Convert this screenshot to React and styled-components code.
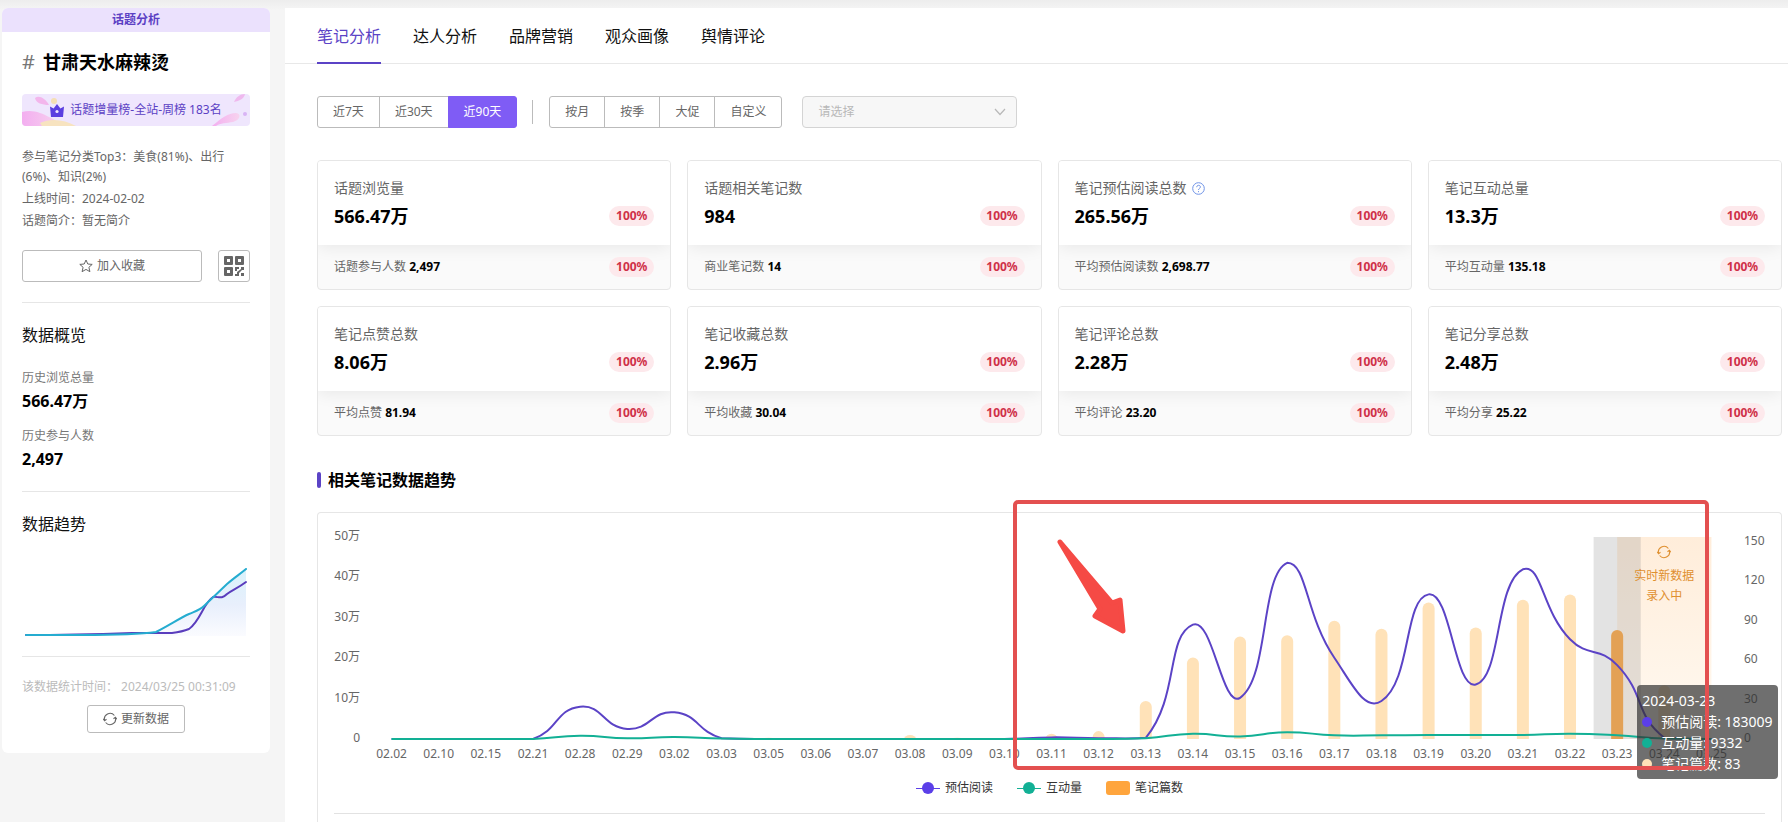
import { useLayoutEffect, useRef, useState } from 'react';
import styled, { createGlobalStyle } from 'styled-components';

const tabs = ['笔记分析', '达人分析', '品牌营销', '观众画像', '舆情评论'];
const quickRanges = ['近7天', '近30天', '近90天'];
const periods = ['按月', '按季', '大促', '自定义'];

const metrics = [
    { title: '话题浏览量', value: '566.47万', subLabel: '话题参与人数', subValue: '2,497' },
    { title: '话题相关笔记数', value: '984', subLabel: '商业笔记数', subValue: '14' },
    { title: '笔记预估阅读总数', value: '265.56万', subLabel: '平均预估阅读数', subValue: '2,698.77', help: true },
    { title: '笔记互动总量', value: '13.3万', subLabel: '平均互动量', subValue: '135.18' },
    { title: '笔记点赞总数', value: '8.06万', subLabel: '平均点赞', subValue: '81.94' },
    { title: '笔记收藏总数', value: '2.96万', subLabel: '平均收藏', subValue: '30.04' },
    { title: '笔记评论总数', value: '2.28万', subLabel: '平均评论', subValue: '23.20' },
    { title: '笔记分享总数', value: '2.48万', subLabel: '平均分享', subValue: '25.22' },
];

const days = [
    '02.02', '02.10', '02.15', '02.21', '02.28', '02.29', '03.02', '03.03', '03.05', '03.06',
    '03.07', '03.08', '03.09', '03.10', '03.11', '03.12', '03.13', '03.14', '03.15', '03.16',
    '03.17', '03.18', '03.19', '03.20', '03.21', '03.22', '03.23', '03.24', '03.25',
];

// reads and interactions are in units of 万
const reads = [
    0, 0, 0, 0, 8, 2.5, 6.6, 0.2, 0, 0, 0, 0, 0, 0, 0.4, 0.2, 0.3, 28.3, 10.2, 43.6,
    20.1, 9.4, 35.8, 13.5, 42, 24.7, 18.3, 0.3, 0,
];
const interactions = [
    0, 0, 0, 0, 0.8, 0.2, 0.5, 0.1, 0, 0, 0, 0, 0, 0, 0, 0, 0.2, 1.3, 0.6, 1.7,
    0.9, 0.9, 1, 1, 1, 1.3, 0.93, 0.1, 0,
];
const notes = [
    0, 0, 0, 0, 0, 0, 0, 0, 1, 0, 0, 3, 1, 0, 4, 6, 29, 62, 78, 79,
    90, 84, 104, 85, 106, 110, 83, 41, 0,
];

const PLOT = { left: 34, right: 30, top: 24, bottom: 226 };
const ACTIVE_DAY = 26;

function smoothPath(points) {
    const ys = points.map(p => p[1]);
    const minY = Math.min(...ys);
    const maxY = Math.max(...ys);
    const clamp = y => Math.max(minY, Math.min(maxY, y));

    let d = `M${points[0][0]} ${points[0][1]}`;
    let cp0 = points[0];
    for (let i = 1; i < points.length; i++) {
        const [px, py] = points[i - 1];
        const [x, y] = points[i];
        const next = points[i + 1];
        let cp1 = [x, y];
        let nextCp = [x, y];
        if (next) {
            const vx = next[0] - px;
            const vy = next[1] - py;
            const before = Math.hypot(x - px, y - py);
            const after = Math.hypot(next[0] - x, next[1] - y);
            const ratio = after / (before + after);
            cp1 = [x - vx * 0.5 * (1 - ratio), clamp(y - vy * 0.5 * (1 - ratio))];
            nextCp = [x + vx * 0.5 * ratio, clamp(y + vy * 0.5 * ratio)];
        }
        d += `C${cp0[0]} ${cp0[1]} ${cp1[0]} ${cp1[1]} ${x} ${y}`;
        cp0 = nextCp;
    }
    return d;
}

// a bar 12 wide with a round top
function barPath(x, top) {
    const r = Math.min(6, PLOT.bottom - top);
    return `M${x - 6} ${PLOT.bottom}V${top + r}A6 ${r} 0 0 1 ${x + 6} ${top + r}V${PLOT.bottom}z`;
}

function RefreshIcon({ size = 14 }) {
    return (
        <svg width={size} height={size} viewBox="0 0 14 14" fill="none" stroke="currentColor" strokeWidth="1.1" aria-hidden="true">
            <path d="M1.6 8.4A5.6 5.6 0 0 1 11.4 3.5M12.4 5.6A5.6 5.6 0 0 1 2.6 10.5" />
            <path d="M0.2 6.8L1.6 8.8L3.5 7.3M13.8 7.2L12.4 5.2L10.5 6.7" />
        </svg>
    );
}

function QrIcon() {
    return (
        <svg width="20" height="20" viewBox="0 0 20 20" aria-hidden="true">
            <path
                fill="#666"
                fillRule="evenodd"
                d="M1 0h7a1 1 0 0 1 1 1v7a1 1 0 0 1-1 1H1a1 1 0 0 1-1-1V1a1 1 0 0 1 1-1zM3 3v3h3V3zM12 0h7a1 1 0 0 1 1 1v7a1 1 0 0 1-1 1h-7a1 1 0 0 1-1-1V1a1 1 0 0 1 1-1zM14 3v3h3V3zM1 11h7a1 1 0 0 1 1 1v7a1 1 0 0 1-1 1H1a1 1 0 0 1-1-1v-7a1 1 0 0 1 1-1zM3 14v3h3v-3z"
            />
            <path fill="#666" d="M11 11h4v2h-2v2h-2zM17 11h3v3h-2l-3 3v3h-4v-2h2v-2l4-3zM17 17h3v3h-3z" />
        </svg>
    );
}

function RankBanner() {
    return (
        <Banner href="#rank">
            <BannerArt viewBox="0 0 228 32" preserveAspectRatio="none" aria-hidden="true">
                <defs>
                    <linearGradient id="pink" x1="0" x2="1">
                        <stop offset="0" stopColor="#f3aef0" />
                        <stop offset="1" stopColor="#f7d3ee" />
                    </linearGradient>
                </defs>
                <path d="M0 18C10 15 20 19 27 23C33 26 36 28 40 32H0z" fill="url(#pink)" />
                <path d="M18 29C28 24 42 25 54 32H20z" fill="#f7e3c0" />
                <path d="M13 4C17 1 23 4 27 11C20 11 14 9 13 4z" fill="#f3b6ec" />
                <circle cx="32" cy="7" r="3" fill="#f5dfb4" />
                <path d="M190 32C200 24 206 19 214 19C220 20 218 26 211 28C205 29 198 29 194 32z" fill="url(#pink)" />
                <path d="M212 8C214 3 218 0 223 0C222 5 217 7 212 8z" fill="#efb9ee" />
                <circle cx="223" cy="20" r="2" fill="#d9b4f5" />
            </BannerArt>
            <svg width="14" height="13" viewBox="0 0 14 13" aria-hidden="true">
                <path d="M0 2.5L3.6 4.6L7 0L10.4 4.6L14 2.5L13 13H1z" fill="#5b3fe0" />
                <circle cx="7" cy="7.5" r="1.6" fill="#efe6fd" />
            </svg>
            <span>话题增量榜-全站-周榜 183名</span>
        </Banner>
    );
}

function MiniTrend() {
    const blue = 'M4 67L60 67C100 67 120 66 134 64C146 58 158 50 167 46C174 43 178 42 182 38L205 16C212 10 218 6 224 1';
    const purple = 'M4 67C50 67 80 66 110 65L150 65C158 64 162 63 167 61C178 54 182 34 191 29C196 28 199 32 205 26C210 22 216 20 224 14';
    return (
        <MiniSvg viewBox="0 0 228 68" preserveAspectRatio="none" fill="none" role="img" aria-label="数据趋势">
            <defs>
                <linearGradient id="fade" x1="0" x2="0" y1="0" y2="1">
                    <stop offset="0" stopColor="#d9f2fb" />
                    <stop offset="0.5" stopColor="#e8effc" />
                    <stop offset="1" stopColor="#fdfdff" />
                </linearGradient>
            </defs>
            <path d={`${blue}V72H4z`} fill="url(#fade)" />
            <path d={purple} stroke="#5a3dbd" strokeWidth="2" strokeLinecap="round" />
            <path d={blue} stroke="#25acd0" strokeWidth="2" strokeLinecap="round" />
        </MiniSvg>
    );
}

function Sidebar() {
    return (
        <Aside>
            <AsideHeader>话题分析</AsideHeader>
            <AsideBody>
                <TopicName><Hash>#</Hash>甘肃天水麻辣烫</TopicName>
                <RankBanner />
                <Meta>
                    <p>参与笔记分类Top3：美食(81%)、出行(6%)、知识(2%)</p>
                    <p>上线时间：2024-02-02</p>
                    <p>话题简介：暂无简介</p>
                </Meta>
                <Actions>
                    <FavButton type="button">
                        <svg width="14" height="14" viewBox="0 0 14 14" fill="none" stroke="currentColor" strokeLinejoin="round" aria-hidden="true">
                            <path d="M7 1L8.8 5L13.2 5.4L9.9 8.3L10.9 12.7L7 10.4L3.1 12.7L4.1 8.3L0.8 5.4L5.2 5z" />
                        </svg>
                        加入收藏
                    </FavButton>
                    <QrButton type="button" aria-label="二维码"><QrIcon /></QrButton>
                </Actions>
                <Block>
                    <BlockTitle>数据概览</BlockTitle>
                    <Stat><dt>历史浏览总量</dt><dd>566.47万</dd></Stat>
                    <Stat><dt>历史参与人数</dt><dd>2,497</dd></Stat>
                </Block>
                <Block>
                    <BlockTitle>数据趋势</BlockTitle>
                    <MiniTrend />
                </Block>
                <Footer>
                    <Stamp>该数据统计时间： 2024/03/25 00:31:09</Stamp>
                    <UpdateButton type="button"><RefreshIcon />更新数据</UpdateButton>
                </Footer>
            </AsideBody>
        </Aside>
    );
}

function MetricCard({ item }) {
    return (
        <Card>
            <CardTop>
                <CardTitle>
                    {item.title}
                    {item.help && (
                        <svg width="13" height="13" viewBox="0 0 13 13" fill="none" stroke="#6f93e6" aria-hidden="true">
                            <circle cx="6.5" cy="6.5" r="5.8" />
                            <path d="M4.7 5.2C4.7 2.6 8.4 2.8 8.4 5C8.4 6.4 6.5 6.4 6.5 8M6.5 9.1V10.2" />
                        </svg>
                    )}
                </CardTitle>
                <CardRow>
                    <Value>{item.value}</Value>
                    <Badge>100%</Badge>
                </CardRow>
            </CardTop>
            <CardBottom>
                <span>{item.subLabel} <b>{item.subValue}</b></span>
                <Badge>100%</Badge>
            </CardBottom>
        </Card>
    );
}

function TrendChart() {
    const box = useRef(null);
    const [width, setWidth] = useState(1430);

    useLayoutEffect(() => {
        const measure = () => setWidth(box.current.clientWidth);
        measure();
        const observer = new ResizeObserver(measure);
        observer.observe(box.current);
        return () => observer.disconnect();
    }, []);

    const step = (width - PLOT.left - PLOT.right) / days.length;
    const xAt = i => PLOT.left + step * (i + 0.5);
    const yLeft = v => PLOT.bottom - v * 4.04;
    const yRight = v => PLOT.bottom - v * 1.313;
    const line = values => smoothPath(values.map((v, i) => [xAt(i), yLeft(v)]));

    return (
        <ChartBox ref={box}>
            <ChartSvg width={width} height="256" role="img" aria-label="相关笔记数据趋势">
                <defs>
                    <linearGradient id="live" x1="0" x2="0" y1="0" y2="1">
                        <stop offset="0" stopColor="#ffedda" />
                        <stop offset="1" stopColor="#fff9f1" />
                    </linearGradient>
                </defs>
                <rect x={xAt(ACTIVE_DAY)} y={PLOT.top} width={step * 2} height={PLOT.bottom - PLOT.top} fill="url(#live)" />
                {notes.map((v, i) => v > 0 && (
                    <path key={days[i]} d={barPath(xAt(i), yRight(v))} fill={i === ACTIVE_DAY ? '#ffa53d' : '#ffe2b8'} />
                ))}
                <rect x={xAt(ACTIVE_DAY) - step / 2} y={PLOT.top} width={step} height={PLOT.bottom - PLOT.top} fill="rgba(150,150,150,0.27)" />
                <path d={line(reads)} fill="none" stroke="#5b43c6" strokeWidth="2" />
                <path d={line(interactions)} fill="none" stroke="#12b095" strokeWidth="2" />
                {[0, 10, 20, 30, 40, 50].map(v => (
                    <text key={v} x="26" y={yLeft(v) + 3} textAnchor="end">{v ? `${v}万` : '0'}</text>
                ))}
                {[0, 30, 60, 90, 120, 150].map(v => (
                    <text key={v} x={width - 21} y={yRight(v) + 3}>{v}</text>
                ))}
                {days.map((day, i) => (
                    <text key={day} x={xAt(i)} y="245" textAnchor="middle">{day}</text>
                ))}
            </ChartSvg>
            <LiveNote style={{ left: xAt(ACTIVE_DAY + 1) }}>
                <RefreshIcon />
                <span>实时新数据</span>
                <span>录入中</span>
            </LiveNote>
            <Tooltip style={{ left: xAt(ACTIVE_DAY) + 20 }}>
                <div>2024-03-23</div>
                <div><Dot $color="#5b3fe8" />预估阅读: 183009</div>
                <div><Dot $color="#12b095" />互动量: 9332</div>
                <div><Dot $color="#ffe2b8" />笔记篇数: 83</div>
            </Tooltip>
            <Highlight style={{ left: xAt(13) + 9, width: step * 15 - 11 }} />
            <Arrow style={{ left: xAt(14) + 5 }} viewBox="0 0 70 96" aria-hidden="true">
                <path
                    d="M3 3L55 64L63 61L66 92L38 77L43 70z"
                    fill="#f54a45"
                    stroke="#f54a45"
                    strokeWidth="5"
                    strokeLinejoin="round"
                />
            </Arrow>
        </ChartBox>
    );
}

export default function App() {
    const [tab, setTab] = useState(tabs[0]);
    const [range, setRange] = useState('近90天');

    return (
        <>
            <GlobalStyle />
            <Page>
                <Sidebar />
                <Main>
                    <Tabs>
                        {tabs.map(name => (
                            <Tab key={name} type="button" $active={name === tab} onClick={() => setTab(name)}>{name}</Tab>
                        ))}
                    </Tabs>
                    <Content>
                        <Filters>
                            <Group>
                                {quickRanges.map(name => (
                                    <GroupButton key={name} type="button" $active={name === range} onClick={() => setRange(name)}>{name}</GroupButton>
                                ))}
                            </Group>
                            <Separator />
                            <Group>
                                {periods.map(name => (
                                    <GroupButton key={name} type="button" $active={name === range} onClick={() => setRange(name)}>{name}</GroupButton>
                                ))}
                            </Group>
                            <SelectBox>
                                <select aria-label="请选择" disabled defaultValue="">
                                    <option value="">请选择</option>
                                </select>
                                <svg width="12" height="8" viewBox="0 0 12 8" fill="none" stroke="#b8b8b8" strokeWidth="1.2" aria-hidden="true">
                                    <path d="M1 1L6 6.5L11 1" />
                                </svg>
                            </SelectBox>
                        </Filters>
                        <Cards>
                            {metrics.map(item => <MetricCard key={item.title} item={item} />)}
                        </Cards>
                        <SectionTitle>相关笔记数据趋势</SectionTitle>
                        <ChartPanel>
                            <TrendChart />
                            <Legend>
                                <LegendItem><LineMark $color="#5b3fe8" />预估阅读</LegendItem>
                                <LegendItem><LineMark $color="#12b095" />互动量</LegendItem>
                                <LegendItem><BarMark />笔记篇数</LegendItem>
                            </Legend>
                            <Rule />
                        </ChartPanel>
                    </Content>
                </Main>
            </Page>
        </>
    );
}

const GlobalStyle = createGlobalStyle`
    * {
        box-sizing: border-box;
    }

    body {
        margin: 0;
        background: #f5f5f5;
        color: #111;
        font-family: 'Noto Sans', 'Noto Sans CJK SC', sans-serif;
        font-size: 12px;
        line-height: 20px;
    }

    button, select {
        font: inherit;
        cursor: pointer;
    }

    p, dl, dd, h1, h2, h3 {
        margin: 0;
    }
`;

const Page = styled.div`
    display: flex;
    align-items: flex-start;
    gap: 15px;
    min-height: 100vh;
    padding: 8px 0 0 2px;
    background: linear-gradient(#ededed, #f5f5f5 10px);
`;

const Aside = styled.aside`
    flex: 0 0 268px;
    border-radius: 6px;
    background: #fff;
    overflow: hidden;
`;

const AsideHeader = styled.div`
    height: 24px;
    line-height: 24px;
    background: #ebe1fd;
    color: #5b3fc4;
    font-weight: 700;
    text-align: center;
`;

const AsideBody = styled.div`
    padding: 16px 20px 20px;
`;

const TopicName = styled.h1`
    display: flex;
    gap: 8px;
    font-size: 18px;
    line-height: 28px;
    font-weight: 700;
    color: #000;
`;

const Hash = styled.span`
    font-size: 20px;
    font-weight: 400;
    color: #777;
`;

const Banner = styled.a`
    position: relative;
    display: flex;
    align-items: center;
    justify-content: center;
    gap: 6px;
    height: 32px;
    margin-top: 18px;
    border-radius: 4px;
    background: #efe6fd;
    color: #5b3fc4;
    text-decoration: none;
    overflow: hidden;

    > * {
        z-index: 1;
    }
`;

const BannerArt = styled.svg`
    position: absolute;
    inset: 0;
    width: 100%;
    height: 100%;

    && {
        z-index: 0;
    }
`;

const Meta = styled.div`
    display: flex;
    flex-direction: column;
    gap: 2px;
    margin-top: 21px;
    color: #666;
`;

const Actions = styled.div`
    display: flex;
    gap: 16px;
    margin-top: 19px;
    padding-bottom: 20px;
`;

const OutlineButton = styled.button`
    display: flex;
    align-items: center;
    justify-content: center;
    gap: 4px;
    padding: 0;
    border: 1px solid #bbb;
    border-radius: 3px;
    background: #fff;
    color: #666;
`;

const FavButton = styled(OutlineButton)`
    flex: 1;
    height: 32px;
`;

const QrButton = styled(OutlineButton)`
    width: 32px;
    height: 32px;
`;

const Block = styled.section`
    padding: 20px 0;
    border-top: 1px solid #e6e6e6;
`;

const BlockTitle = styled.h2`
    margin-bottom: 20px;
    font-size: 16px;
    line-height: 24px;
    font-weight: 400;
`;

const Stat = styled.dl`
    & + & {
        margin-top: 12px;
    }

    dt {
        color: #777;
        line-height: 22px;
    }

    dd {
        color: #000;
        font-size: 16px;
        line-height: 24px;
        font-weight: 700;
    }
`;

const MiniSvg = styled.svg`
    display: block;
    width: 100%;
    height: 68px;
    margin-top: 32px;
`;

const Footer = styled.div`
    display: flex;
    flex-direction: column;
    align-items: center;
    gap: 8px;
    padding-top: 20px;
    border-top: 1px solid #e6e6e6;
`;

const Stamp = styled.p`
    align-self: flex-start;
    color: #bbb;
    white-space: pre;
`;

const UpdateButton = styled(OutlineButton)`
    width: 98px;
    height: 28px;
`;

const Main = styled.main`
    flex: 1;
    min-width: 0;
    min-height: calc(100vh - 8px);
    display: flex;
    flex-direction: column;
    background: #fff;
`;

const Tabs = styled.nav`
    display: flex;
    gap: 32px;
    height: 56px;
    padding: 0 32px;
    border-bottom: 1px solid #e8e8e8;
`;

const Tab = styled.button`
    height: 56px;
    padding: 2px 0 0;
    border: 0;
    border-bottom: 2px solid ${p => (p.$active ? '#5b43c6' : 'transparent')};
    background: none;
    color: ${p => (p.$active ? '#5b43c6' : '#111')};
    font-size: 16px;
`;

const Content = styled.div`
    flex: 1;
    display: flex;
    flex-direction: column;
    padding: 32px 6px 0 32px;
`;

const Filters = styled.div`
    display: flex;
    align-items: center;
`;

const Group = styled.div`
    display: flex;
`;

const GroupButton = styled.button`
    height: 32px;
    padding: 0 15px;
    border: 1px solid ${p => (p.$active ? '#7f5cf5' : '#bbb')};
    background: ${p => (p.$active ? '#7f5cf5' : '#fff')};
    color: ${p => (p.$active ? '#fff' : '#666')};

    & + & {
        margin-left: -1px;
    }

    &:first-child {
        border-radius: 3px 0 0 3px;
    }

    &:last-child {
        border-radius: 0 3px 3px 0;
    }
`;

const Separator = styled.span`
    width: 1px;
    height: 24px;
    margin: 0 16px 0 15px;
    background: #bbb;
`;

const SelectBox = styled.div`
    position: relative;
    width: 215px;
    margin-left: 20px;

    select {
        appearance: none;
        display: block;
        width: 100%;
        height: 32px;
        padding: 0 15px;
        border: 1px solid #d4d4d4;
        border-radius: 4px;
        background: #f7f7f7;
        color: #b8b8b8;
        opacity: 1;
    }

    svg {
        position: absolute;
        right: 11px;
        top: 12px;
        pointer-events: none;
    }
`;

const Cards = styled.div`
    display: grid;
    grid-template-columns: repeat(4, 1fr);
    gap: 16px;
    margin-top: 32px;
`;

const Card = styled.article`
    border: 1px solid #e6e6e6;
    border-radius: 4px;
    background: #fafafa;
    overflow: hidden;
`;

const CardTop = styled.div`
    height: 84px;
    padding: 15px 16px 0;
    background: #fff;
    box-shadow: 0 2px 16px rgba(0, 0, 0, 0.08);
`;

const CardTitle = styled.h3`
    display: flex;
    align-items: center;
    gap: 5px;
    color: #666;
    font-size: 14px;
    line-height: 24px;
    font-weight: 400;
`;

const CardRow = styled.div`
    display: flex;
    align-items: center;
    justify-content: space-between;
    margin-top: 2px;
`;

const Value = styled.strong`
    color: #000;
    font-size: 18px;
    line-height: 28px;
    font-weight: 700;
`;

const Badge = styled.span`
    width: 45px;
    border-radius: 10px;
    background: #fde9ec;
    color: #cf3048;
    font-weight: 700;
    text-align: center;
`;

const CardBottom = styled.div`
    position: relative;
    display: flex;
    align-items: center;
    justify-content: space-between;
    height: 44px;
    padding: 0 16px;
    color: #666;

    b {
        color: #000;
    }
`;

const SectionTitle = styled.h2`
    display: flex;
    align-items: center;
    gap: 7px;
    margin: 32px 0 20px;
    font-size: 16px;
    line-height: 24px;
    font-weight: 700;
    color: #000;

    &::before {
        content: '';
        width: 4px;
        height: 16px;
        border-radius: 2px;
        background: #5b43c6;
    }
`;

const ChartPanel = styled.section`
    flex: 1;
    padding: 0 16px;
    border: 1px solid #e6e6e6;
    border-bottom: 0;
    border-radius: 4px 4px 0 0;
`;

const ChartBox = styled.div`
    position: relative;
    height: 256px;
`;

const ChartSvg = styled.svg`
    display: block;
    overflow: visible;

    text {
        fill: #666;
        font-size: 12px;
    }
`;

const LiveNote = styled.div`
    position: absolute;
    top: 32px;
    display: flex;
    flex-direction: column;
    align-items: center;
    color: #df9030;
    white-space: nowrap;
    transform: translateX(-50%);

    svg {
        margin-bottom: 7px;
    }
`;

const Tooltip = styled.div`
    position: absolute;
    top: 172px;
    padding: 5px;
    border-radius: 4px;
    background: rgba(50, 50, 50, 0.7);
    color: #fff;
    font-size: 14px;
    line-height: 21px;
    white-space: nowrap;
`;

const Dot = styled.span`
    display: inline-block;
    width: 10px;
    height: 10px;
    margin-right: 9px;
    border-radius: 50%;
    background: ${p => p.$color};
`;

const Highlight = styled.div`
    position: absolute;
    top: -13px;
    height: 270px;
    border: 4px solid #e35050;
    border-radius: 5px;
    pointer-events: none;
`;

const Arrow = styled.svg`
    position: absolute;
    top: 26px;
    width: 70px;
    height: 96px;
`;

const Legend = styled.ul`
    display: flex;
    justify-content: center;
    gap: 24px;
    margin: 9px 0 0;
    padding: 0;
    list-style: none;
`;

const LegendItem = styled.li`
    display: flex;
    align-items: center;
    gap: 5px;
    color: #333;
`;

const LineMark = styled.span`
    display: flex;
    align-items: center;
    justify-content: center;
    width: 24px;
    height: 12px;
    background: linear-gradient(${p => p.$color}, ${p => p.$color}) center / 100% 1px no-repeat;

    &::before {
        content: '';
        width: 12px;
        height: 12px;
        border-radius: 50%;
        background: ${p => p.$color};
    }
`;

const BarMark = styled.span`
    width: 24px;
    height: 14px;
    border-radius: 3px;
    background: #ffa53d;
`;

const Rule = styled.hr`
    margin: 15px 0 0;
    border: 0;
    border-top: 1px solid #e2e2e2;
`;
